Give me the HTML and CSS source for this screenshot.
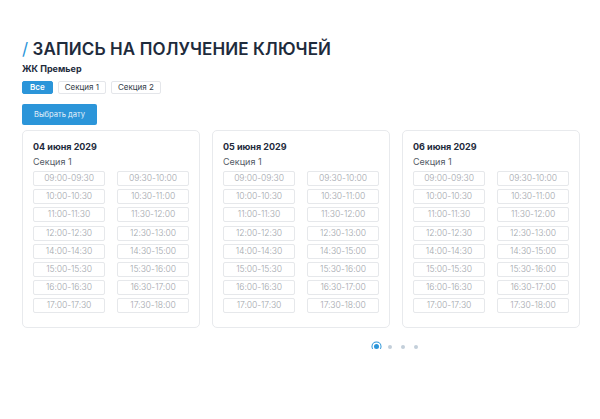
FILE: index.html
```html
<!DOCTYPE html>
<html lang="ru">
<head>
<meta charset="utf-8">
<link rel="stylesheet" href="styles.css">
</head>
<body>
<div class="page">
  <h1 class="title"><span class="slash">/</span> ЗАПИСЬ НА ПОЛУЧЕНИЕ КЛЮЧЕЙ</h1>
  <div class="complex">ЖК Премьер</div>
  <div class="tabs">
    <span class="tab active">Все</span>
    <span class="tab">Секция 1</span>
    <span class="tab">Секция 2</span>
  </div>
  <button class="pick">Выбрать дату</button>
  <div class="cards">
    <div class="card">
      <div class="date">04 июня 2029</div>
      <div class="section">Секция 1</div>
      <div class="slots">
        <span class="slot">09:00-09:30</span><span class="slot">09:30-10:00</span>
        <span class="slot">10:00-10:30</span><span class="slot">10:30-11:00</span>
        <span class="slot">11:00-11:30</span><span class="slot">11:30-12:00</span>
        <span class="slot">12:00-12:30</span><span class="slot">12:30-13:00</span>
        <span class="slot">14:00-14:30</span><span class="slot">14:30-15:00</span>
        <span class="slot">15:00-15:30</span><span class="slot">15:30-16:00</span>
        <span class="slot">16:00-16:30</span><span class="slot">16:30-17:00</span>
        <span class="slot">17:00-17:30</span><span class="slot">17:30-18:00</span>
      </div>
    </div>
    <div class="card">
      <div class="date">05 июня 2029</div>
      <div class="section">Секция 1</div>
      <div class="slots">
        <span class="slot">09:00-09:30</span><span class="slot">09:30-10:00</span>
        <span class="slot">10:00-10:30</span><span class="slot">10:30-11:00</span>
        <span class="slot">11:00-11:30</span><span class="slot">11:30-12:00</span>
        <span class="slot">12:00-12:30</span><span class="slot">12:30-13:00</span>
        <span class="slot">14:00-14:30</span><span class="slot">14:30-15:00</span>
        <span class="slot">15:00-15:30</span><span class="slot">15:30-16:00</span>
        <span class="slot">16:00-16:30</span><span class="slot">16:30-17:00</span>
        <span class="slot">17:00-17:30</span><span class="slot">17:30-18:00</span>
      </div>
    </div>
    <div class="card">
      <div class="date">06 июня 2029</div>
      <div class="section">Секция 1</div>
      <div class="slots">
        <span class="slot">09:00-09:30</span><span class="slot">09:30-10:00</span>
        <span class="slot">10:00-10:30</span><span class="slot">10:30-11:00</span>
        <span class="slot">11:00-11:30</span><span class="slot">11:30-12:00</span>
        <span class="slot">12:00-12:30</span><span class="slot">12:30-13:00</span>
        <span class="slot">14:00-14:30</span><span class="slot">14:30-15:00</span>
        <span class="slot">15:00-15:30</span><span class="slot">15:30-16:00</span>
        <span class="slot">16:00-16:30</span><span class="slot">16:30-17:00</span>
        <span class="slot">17:00-17:30</span><span class="slot">17:30-18:00</span>
      </div>
    </div>
  </div>
  <div class="dots">
    <span class="dot active"></span>
    <span class="dot"></span>
    <span class="dot"></span>
    <span class="dot"></span>
  </div>
</div>
</body>
</html>
```
FILE: styles.css
```css
* { box-sizing: border-box; }
html, body { margin: 0; padding: 0; background: #fff; }
body { font-family: "Inter", "Noto Sans", sans-serif; color: #1e2b3c; }
.page { padding: 38px 0 0 22px; width: 600px; }
.title {
  margin: 0;
  font-size: 17px;
  line-height: 22px;
  font-weight: 600;
  color: #1e2b3c;
  letter-spacing: 0.1px;
}
.slash { color: #2b95d9; font-weight: 400; }
.complex {
  margin-top: 3px;
  font-size: 9px;
  line-height: 12px;
  font-weight: 700;
  color: #1e2b3c;
}
.tabs { display: flex; gap: 5px; margin-top: 6px; }
.tab {
  display: inline-block;
  height: 13px;
  padding: 0 6px;
  font-size: 8px;
  line-height: 11px;
  border: 1px solid #e4e6ea;
  border-radius: 2px;
  color: #333c48;
}
.tab.active { padding: 0 7px; background: #2b95d9; border-color: #2b95d9; color: #fff; font-weight: 600; }
.pick {
  display: block;
  margin-top: 10px;
  width: 75px;
  height: 21px;
  padding: 0;
  border: 0;
  border-radius: 2px;
  background: #2b95d9;
  color: #e3f0fa;
  font-family: inherit;
  font-size: 7.6px;
}
.cards { display: flex; gap: 12px; margin-top: 5px; }
.card {
  width: 178px;
  border: 1px solid #e8eaed;
  border-radius: 5px;
  padding: 9px 10px 14px 10px;
}
.date { font-size: 9px; line-height: 13px; font-weight: 700; color: #1e2b3c; }
.section { margin-top: 3px; font-size: 9px; line-height: 12px; color: #555c66; }
.slots {
  margin-top: 3px;
  display: grid;
  grid-template-columns: 72px 72px;
  column-gap: 12px;
  row-gap: 3.2px;
}
.slot {
  height: 15px;
  border: 1px solid #e6e8eb;
  border-radius: 2px;
  font-size: 8.6px;
  line-height: 13px;
  text-align: center;
  color: #a2a6ac;
  font-weight: 300;
  letter-spacing: -0.1px;
}
.dots { display: flex; align-items: center; gap: 9px; margin-top: 16px; padding-left: 352px; }
.dot { width: 4px; height: 4px; border-radius: 50%; background: #c3cfda; }
.dot.active {
  width: 5px; height: 5px; background: #2b95d9;
  box-shadow: 0 0 0 1.5px #fff, 0 0 0 2.5px #2b95d9;
}
```
